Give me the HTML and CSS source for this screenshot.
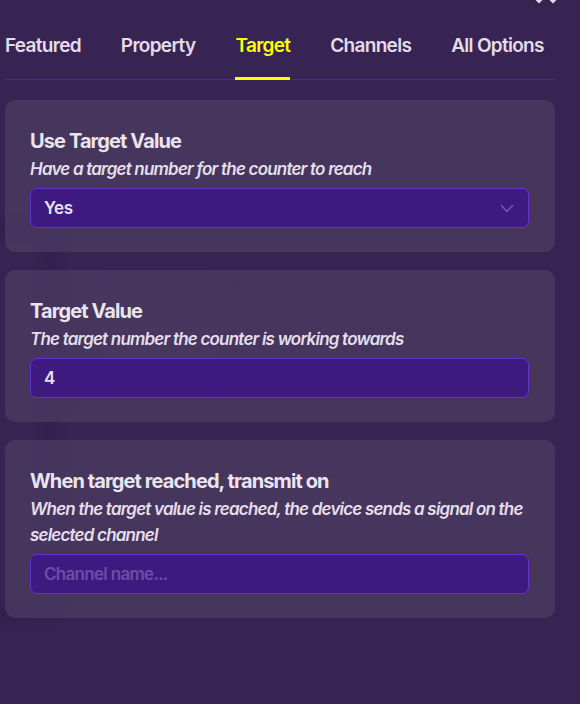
FILE: index.html
```html
<!DOCTYPE html>
<html lang="en">
<head>
<meta charset="utf-8">
<title>Target options</title>
<link rel="stylesheet" href="styles.css">
</head>
<body>
<div class="backdrop">
  <div class="ghost ghost-left"></div>
  <div class="ghost ghost-mid"></div>
</div>
<svg class="corner-icon" width="24" height="12" viewBox="0 0 24 12" aria-hidden="true">
  <path d="M2 0 L5 3 L8 0" fill="none" stroke="#e6e1ee" stroke-width="2" stroke-linecap="round"/>
  <path d="M16 0 L19 3 L22 0" fill="none" stroke="#e6e1ee" stroke-width="2" stroke-linecap="round"/>
</svg>
<div class="panel">
  <nav class="tabs">
    <span class="tab">Featured</span>
    <span class="tab">Property</span>
    <span class="tab active">Target</span>
    <span class="tab">Channels</span>
    <span class="tab">All Options</span>
  </nav>
  <div class="cards">
    <section class="card">
      <h2 class="card-title">Use Target Value</h2>
      <p class="card-desc">Have a target number for the counter to reach</p>
      <div class="field select">
        <span class="field-value">Yes</span>
        <svg class="chevron" width="14" height="9" viewBox="0 0 14 9" aria-hidden="true">
          <path d="M1 1 L7 7.5 L13 1" fill="none" stroke="#7a5bb4" stroke-width="1.3"/>
        </svg>
      </div>
    </section>
    <section class="card">
      <h2 class="card-title">Target Value</h2>
      <p class="card-desc">The target number the counter is working towards</p>
      <div class="field">
        <span class="field-value">4</span>
      </div>
    </section>
    <section class="card">
      <h2 class="card-title">When target reached, transmit on</h2>
      <p class="card-desc">When the target value is reached, the device sends a signal on the selected channel</p>
      <div class="field">
        <span class="field-placeholder">Channel name...</span>
      </div>
    </section>
  </div>
</div>
</body>
</html>
```

FILE: styles.css
```css
html, body {
  margin: 0;
  padding: 0;
}

body {
  background: #372453;
  font-family: Inter, "Noto Sans", sans-serif;
  width: 580px;
  height: 704px;
  overflow: hidden;
  position: relative;
}

.backdrop {
  position: absolute;
  inset: 0;
  pointer-events: none;
}

.ghost {
  position: absolute;
  filter: blur(6px);
}

.ghost-left {
  left: -20px;
  top: 225px;
  width: 60px;
  height: 380px;
  border: 6px solid #2c1a48;
  border-radius: 10px;
}

.ghost-mid {
  left: 88px;
  top: 278px;
  width: 135px;
  height: 125px;
  background: #3c2a55;
  border-radius: 14px;
}

.corner-icon {
  position: absolute;
  right: 22px;
  top: -1px;
}

.panel {
  position: relative;
  padding: 0 25px 0 5px;
}

.tabs {
  display: flex;
  gap: 40px;
  padding-top: 34px;
  border-bottom: 1px solid #4c2896;
}

.tab {
  font-size: 19px;
  line-height: 24px;
  font-weight: 600;
  letter-spacing: -0.7px;
  color: #e2dde9;
  padding-bottom: 21px;
}

.tab.active {
  color: #ffff00;
  padding-bottom: 18px;
  border-bottom: 3px solid #ffff00;
  margin-bottom: -1px;
}

.cards {
  display: flex;
  flex-direction: column;
  gap: 18px;
  margin-top: 20px;
}

.card {
  background: rgba(74, 58, 96, 0.8);
  border-radius: 10px;
  padding: 26px 26px 24px 25px;
}

.card-title {
  margin: 0;
  font-size: 20px;
  line-height: 30px;
  font-weight: 700;
  letter-spacing: -0.9px;
  color: #e9e5ef;
}

.card-desc {
  margin: 0;
  font-size: 17px;
  line-height: 26px;
  font-style: italic;
  font-weight: 600;
  letter-spacing: -0.8px;
  color: #e4dfeb;
}

.field {
  margin-top: 6px;
  height: 40px;
  box-sizing: border-box;
  background: #3e1980;
  border: 1px solid #6a2fd4;
  border-radius: 7px;
  display: flex;
  align-items: center;
  justify-content: space-between;
  padding: 0 14px 0 13px;
}

.field-value {
  font-size: 17px;
  font-weight: 600;
  letter-spacing: -0.4px;
  color: #e6e1ee;
}

.field-placeholder {
  font-size: 17px;
  font-weight: 600;
  letter-spacing: -0.7px;
  color: #6b4ea6;
}

.chevron {
  display: block;
}
```
